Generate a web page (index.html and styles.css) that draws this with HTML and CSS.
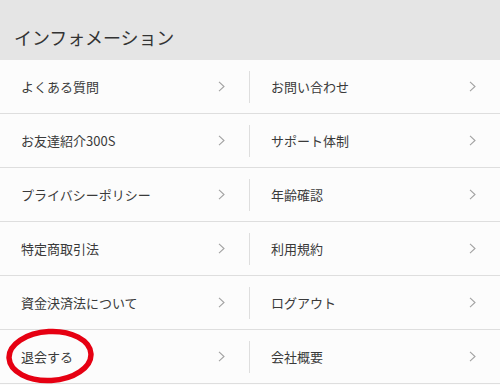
FILE: index.html
```html
<!DOCTYPE html>
<html lang="ja">
<head>
<meta charset="utf-8">
<title>インフォメーション</title>
<link rel="stylesheet" href="styles.css">
</head>
<body>
<div class="page">
  <header class="header">インフォメーション</header>
  <div class="list">
    <div class="row">
      <a class="cell"><span>よくある質問</span><svg class="chev" viewBox="0 0 7 11"><polyline points="1,0.8 6,5.5 1,10.2"/></svg></a>
      <span class="sep"></span>
      <a class="cell"><span>お問い合わせ</span><svg class="chev" viewBox="0 0 7 11"><polyline points="1,0.8 6,5.5 1,10.2"/></svg></a>
    </div>
    <div class="row">
      <a class="cell"><span>お友達紹介300S</span><svg class="chev" viewBox="0 0 7 11"><polyline points="1,0.8 6,5.5 1,10.2"/></svg></a>
      <span class="sep"></span>
      <a class="cell"><span>サポート体制</span><svg class="chev" viewBox="0 0 7 11"><polyline points="1,0.8 6,5.5 1,10.2"/></svg></a>
    </div>
    <div class="row">
      <a class="cell"><span>プライバシーポリシー</span><svg class="chev" viewBox="0 0 7 11"><polyline points="1,0.8 6,5.5 1,10.2"/></svg></a>
      <span class="sep"></span>
      <a class="cell"><span>年齢確認</span><svg class="chev" viewBox="0 0 7 11"><polyline points="1,0.8 6,5.5 1,10.2"/></svg></a>
    </div>
    <div class="row">
      <a class="cell"><span>特定商取引法</span><svg class="chev" viewBox="0 0 7 11"><polyline points="1,0.8 6,5.5 1,10.2"/></svg></a>
      <span class="sep"></span>
      <a class="cell"><span>利用規約</span><svg class="chev" viewBox="0 0 7 11"><polyline points="1,0.8 6,5.5 1,10.2"/></svg></a>
    </div>
    <div class="row">
      <a class="cell"><span>資金決済法について</span><svg class="chev" viewBox="0 0 7 11"><polyline points="1,0.8 6,5.5 1,10.2"/></svg></a>
      <span class="sep"></span>
      <a class="cell"><span>ログアウト</span><svg class="chev" viewBox="0 0 7 11"><polyline points="1,0.8 6,5.5 1,10.2"/></svg></a>
    </div>
    <div class="row">
      <a class="cell marked"><span>退会する</span><svg class="chev" viewBox="0 0 7 11"><polyline points="1,0.8 6,5.5 1,10.2"/></svg>
        <svg class="circle" viewBox="0 0 90 58"><ellipse cx="45" cy="29" rx="41" ry="24.5" transform="rotate(-3 45 29)"/></svg>
      </a>
      <span class="sep"></span>
      <a class="cell"><span>会社概要</span><svg class="chev" viewBox="0 0 7 11"><polyline points="1,0.8 6,5.5 1,10.2"/></svg></a>
    </div>
  </div>
</div>
</body>
</html>
```

FILE: styles.css
```css
* { box-sizing: border-box; }
html, body {
  margin: 0;
  padding: 0;
  background: #fcfcfc;
}
body {
  font-family: "Noto Sans CJK JP", "Noto Sans", sans-serif;
  color: #333;
}
.page {
  width: 500px;
}
.header {
  height: 60px;
  background: #e5e5e5;
  padding: 24px 0 0 14px;
  font-size: 18px;
  line-height: 26px;
  color: #333;
  letter-spacing: -0.1px;
}
.list {
  background: #fcfcfc;
}
.row {
  display: flex;
  height: 54px;
  border-bottom: 1px solid #dedede;
}
.cell {
  position: relative;
  flex: 1;
  display: flex;
  align-items: center;
  justify-content: space-between;
  padding: 0 24px 0 21px;
  font-size: 13px;
  color: #3a3a3a;
  text-decoration: none;
}
.cell:first-child {
  flex: 0 0 249px;
}
.sep {
  width: 1px;
  margin: 11px 0 10px;
  background: #dedede;
}
.chev {
  width: 7px;
  height: 11px;
  fill: none;
  stroke: #a2a2a2;
  stroke-width: 1.1;
}
.circle {
  position: absolute;
  left: 5px;
  top: -3px;
  width: 90px;
  height: 58px;
  fill: none;
  stroke: #e60012;
  stroke-width: 5.5;
}
```
